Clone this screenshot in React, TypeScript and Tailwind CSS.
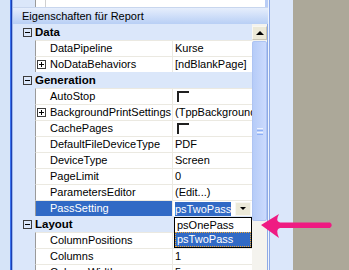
import React from "react";

type Row =
  | { kind: "cat"; label: string }
  | {
      kind: "prop";
      name: string;
      value?: string;
      expand?: boolean;
      check?: boolean;
      active?: boolean;
    };

const rows: Row[] = [
  { kind: "cat", label: "Data" },
  { kind: "prop", name: "DataPipeline", value: "Kurse" },
  { kind: "prop", name: "NoDataBehaviors", value: "[ndBlankPage]", expand: true },
  { kind: "cat", label: "Generation" },
  { kind: "prop", name: "AutoStop", check: true },
  { kind: "prop", name: "BackgroundPrintSettings", value: "(TppBackgroundPrintSettings)", expand: true },
  { kind: "prop", name: "CachePages", check: true },
  { kind: "prop", name: "DefaultFileDeviceType", value: "PDF" },
  { kind: "prop", name: "DeviceType", value: "Screen" },
  { kind: "prop", name: "PageLimit", value: "0" },
  { kind: "prop", name: "ParametersEditor", value: "(Edit...)" },
  { kind: "prop", name: "PassSetting", value: "psTwoPass", active: true },
  { kind: "cat", label: "Layout" },
  { kind: "prop", name: "ColumnPositions", value: "(TStrings)" },
  { kind: "prop", name: "Columns", value: "1" },
  { kind: "prop", name: "ColumnWidth", value: "5" },
];

const Box = ({ plus }: { plus?: boolean }) => (
  <div className="relative w-[9px] h-[9px] border border-[#3c3c3c] shrink-0">
    <div className="absolute left-[1px] top-[3px] w-[5px] h-[1px] bg-black" />
    {plus && <div className="absolute left-[3px] top-[1px] w-[1px] h-[5px] bg-black" />}
  </div>
);

const PropRow = ({ row }: { row: Extract<Row, { kind: "prop" }> }) => (
  <div className="flex h-[16px]">
    <div className="w-[22px] shrink-0" />
    <div
      className={
        row.active
          ? "w-[137px] shrink-0 flex items-center border-l border-t border-l-[#9a9a9a] border-t-[#ebe9e1] bg-[#316ac5] text-white pl-[14px]"
          : row.expand
            ? "w-[137px] shrink-0 flex items-center border-l border-t border-l-[#9a9a9a] border-t-[#ebe9e1] bg-white pl-[1px]"
            : "w-[137px] shrink-0 flex items-center border-l border-t border-l-[#9a9a9a] border-t-[#ebe9e1] bg-white pl-[14px]"
      }
    >
      {row.expand && <Box plus />}
      <span className={row.expand ? "ml-[4px] whitespace-nowrap leading-[15px]" : "whitespace-nowrap leading-[15px]"}>
        {row.name}
      </span>
    </div>
    <div className="w-[80px] shrink-0 flex items-center border-l border-t border-[#ebe9e1] bg-white pl-[2px] overflow-hidden whitespace-nowrap">
      {row.check && <div className="ml-[2px] w-[12px] h-[11px] border-t-2 border-l-2 border-[#202020]" />}
      {row.active ? (
        <>
          <span className="bg-[#316ac5] text-white leading-[14px] h-[14px]">{row.value}</span>
          <div className="ml-auto mr-[1px] w-[16px] h-[14px] bg-[#ece9d8] border border-[#f8f7f2] flex items-center justify-center">
            <div className="w-0 h-0 border-l-[3px] border-r-[3px] border-t-[3px] border-l-transparent border-r-transparent border-t-black" />
          </div>
        </>
      ) : (
        !row.check && <span className="leading-[15px]">{row.value}</span>
      )}
    </div>
  </div>
);

export default function App() {
  return (
    <div className="relative w-[349px] h-[270px] overflow-hidden flex font-['Liberation_Sans',Arial,sans-serif] text-[11px] text-black">
      <div className="w-[10px] bg-[#d6e4f8]" />
      <div className="w-[1px] bg-[#3a72ee]" />
      <div className="w-[1px] bg-[#1d3fb0]" />
      <div className="w-[1px] bg-[#9db8ec]" />

      <div className="w-[255px] flex flex-col bg-[#dbe7fa]">
        <div className="h-[8px] flex border-b border-[#c8d6ee] bg-white">
          <div className="w-[22px] bg-[#dbe7fa]" />
          <div className="w-[10px] border-l border-[#9a9a9a]" />
          <div className="w-[22px] border-l border-[#d0d0d0]" />
          <div className="w-[198px]" />
          <div className="w-[3px] bg-[#b9cdf6]" />
        </div>
        <div className="h-[16px] flex items-center pl-[9px] bg-[linear-gradient(to_bottom,#e6eefc,#b8cff5)]">
          Eigenschaften für Report
        </div>
        <div className="flex-1 flex overflow-hidden">
          <div className="w-[239px] flex flex-col">
            {rows.map((r, i) =>
              r.kind === "cat" ? (
                <div key={i} className="h-[16px] flex items-center pl-[10px] shrink-0">
                  <Box />
                  <span className="ml-[3px] font-bold text-[11.5px] leading-[15px]">{r.label}</span>
                </div>
              ) : (
                <PropRow key={i} row={r} />
              )
            )}
          </div>
          <div className="w-[15px] flex flex-col bg-[#f4f3ee]">
            <div className="mt-[2px] h-[14px] bg-[#ece9d8] border border-[#f8f7f2] border-b-[#c9c5b5] border-r-[#c9c5b5] flex items-center justify-center">
              <div className="w-0 h-0 border-l-[4px] border-r-[4px] border-b-[4px] border-l-transparent border-r-transparent border-b-black" />
            </div>
            <div className="mt-[1px] h-[180px] rounded-[2px] border border-[#aec4f3] bg-[linear-gradient(to_right,#b6ccf8,#cbdafd)] flex flex-col items-center justify-center gap-[1px]">
              <div className="w-[6px] h-[1px] bg-[#eef3fe]" />
              <div className="w-[6px] h-[1px] bg-[#8eb0f6]" />
              <div className="w-[6px] h-[1px] bg-[#eef3fe]" />
              <div className="w-[6px] h-[1px] bg-[#8eb0f6]" />
            </div>
          </div>
          <div className="w-[1px] bg-[#8eaae6]" />
        </div>
      </div>

      <div className="w-[25px] flex">
        <div className="w-[1px] bg-[#f0f5fd]" />
        <div className="w-[1px] bg-[#8eaae6]" />
        <div className="flex-1 bg-[#dbe7fa]" />
      </div>
      <div className="flex-1 bg-[#aca899]" />

      <div className="absolute left-[174px] top-[217px] w-[78px] h-[31px] border border-black bg-white flex flex-col">
        <div className="h-[14px] leading-[14px] pl-[2px]">psOnePass</div>
        <div className="h-[15px] leading-[13px] pl-[1px] bg-[#316ac5] text-white border border-dotted border-[#f0a830]">psTwoPass</div>
      </div>

      <svg className="absolute left-0 top-0 pointer-events-none" width="349" height="270" viewBox="0 0 349 270">
        <path
          d="M261 225 L279 214 Q275 221 280 222.5 L330 222.5 Q333.5 225 330 228 L280 228 Q275 229 279 238 Z"
          fill="#ef1b82"
        />
      </svg>
    </div>
  );
}
